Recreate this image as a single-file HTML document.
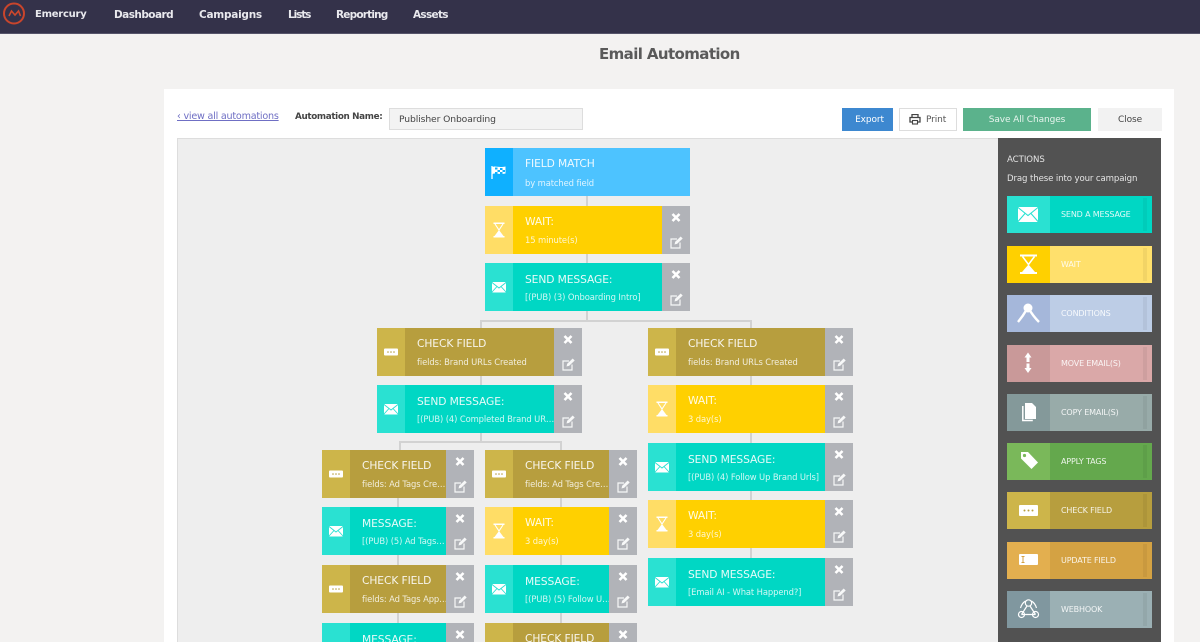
<!DOCTYPE html>
<html><head><meta charset="utf-8"><title>Email Automation</title>
<style>
*{box-sizing:border-box}
html,body{margin:0;padding:0;width:1200px;height:642px;overflow:hidden}
#r{position:absolute;left:0;top:0;width:1200px;height:642px;overflow:hidden;background:#f3f2f1;font-family:"DejaVu Sans","Liberation Sans",sans-serif;color:#fff}
.a{position:absolute;white-space:nowrap}
.nav{left:0;top:0;width:1200px;height:34px;background:#34324a;border-bottom:1px solid #55546a}
.m{top:8px;font-size:10.5px;line-height:14px;font-weight:bold;color:#e9e9ee;letter-spacing:-.35px}
.btn{top:108px;height:23px;line-height:24px;text-align:center;font-size:9px;letter-spacing:-.1px}
.n{position:absolute;height:48px;overflow:hidden}
.n>i{position:absolute;left:0;top:0;width:28px;height:48px}
.n>i svg{position:absolute;left:0;top:0;width:28px;height:48px}
.n>b{position:absolute;left:40px;top:9px;font-weight:normal;font-size:10.7px;line-height:14px;white-space:nowrap;letter-spacing:-.1px;color:rgba(255,255,255,.9)}
.n>em{position:absolute;left:40px;top:28px;font-style:normal;font-size:8.4px;line-height:12px;white-space:nowrap;letter-spacing:-.1px;color:rgba(255,255,255,.82)}
.n>u{position:absolute;right:0;top:0;width:28px;height:48px;background:#b1b3b8;text-decoration:none}
.n>u svg{position:absolute;left:0;top:0;width:28px;height:48px}
.s{background:#00d7c4}.s>i{background:#2ae1d2}.s>b{top:10px}
.w{background:#ffd000}.w>i{background:#ffdd66}
.c{background:#b79e3e}.c>i{background:#cdb54a}
.l{position:absolute;background:#d2d2d2}
.p{position:absolute;left:1007px;width:145px;height:37px}
.p>i{position:absolute;left:0;top:0;width:43px;height:37px}
.p>i svg{position:absolute;left:0;top:0;width:43px;height:37px}
.p>b{position:absolute;left:54px;top:13px;font-weight:normal;font-size:8px;line-height:12px;letter-spacing:-.15px;white-space:nowrap;color:rgba(255,255,255,.88)}
.p>s{position:absolute;left:136px;top:2px;width:4px;height:33px;background:rgba(0,0,0,.05)}
</style></head><body>
<div id="r">
<svg width="0" height="0" style="position:absolute">
<defs>
<symbol id="x" viewBox="0 0 28 48"><path d="M10.500 8l7 7M17.500 8l-7 7" stroke="#fff" stroke-width="2.600" fill="none"/><path d="M18 36.500v5.500H9v-9h6" stroke="#fff" stroke-width="1.200" fill="none" opacity=".9"/><path d="M12.500 38.500l.7-2.700 5.500-5.300 2 2-5.500 5.300z" fill="#fff" opacity=".9"/></symbol>
<symbol id="mail" viewBox="0 0 28 48"><rect x="7" y="19" width="14" height="10.500" rx="1" fill="#fff"/><path d="M7 19.500l7 5.500 7-5.500M7 29l5-5.500M21 29l-5-5.500" stroke="#2ae1d2" stroke-width=".9" fill="none"/></symbol>
<symbol id="glass" viewBox="0 0 28 48"><path d="M8.500 16.500h11V18h-11zM8.500 30h11v1.500h-11z" fill="#fff"/><path d="M10 18l4 6 4-6" fill="none" stroke="#fff" stroke-width="1.100"/><path d="M14 24l4.500 6h-9z" fill="#fff"/></symbol>
<symbol id="dots" viewBox="0 0 28 48"><rect x="7" y="20.500" width="14" height="7" rx="1" fill="#fff"/><circle cx="11" cy="24" r=".8" fill="#b79e3e"/><circle cx="14" cy="24" r=".8" fill="#b79e3e"/><circle cx="17" cy="24" r=".8" fill="#b79e3e"/></symbol>
<symbol id="bmail" viewBox="0 0 43 37"><rect x="11" y="11" width="20" height="15" rx="1" fill="#fff"/><path d="M11 11.500l10 8 10-8M11 25.500l7-8M31 25.500l-7-8" stroke="#2ae1d2" stroke-width="1.100" fill="none"/></symbol>
</defs></svg>

<div class="a nav"></div>
<svg class="a" style="left:3px;top:1px" width="24" height="26" viewBox="0 0 24 26"><circle cx="11" cy="12.500" r="10" fill="none" stroke="#c9452c" stroke-width="2"/><path d="M6 15l2.500-5 3.500 4 3.500-4 2 5" fill="none" stroke="#d0482c" stroke-width="1.600"/></svg>
<div class="a m" style="left:35px;top:8px;font-size:10px;letter-spacing:-.25px">Emercury</div>
<div class="a m" style="left:114px;letter-spacing:-.55px">Dashboard</div>
<div class="a m" style="left:199px;letter-spacing:-.25px">Campaigns</div>
<div class="a m" style="left:288px;letter-spacing:-1.100px">Lists</div>
<div class="a m" style="left:336px;letter-spacing:-.8px">Reporting</div>
<div class="a m" style="left:413px;letter-spacing:-.7px">Assets</div>

<div class="a" style="left:599px;top:45px;font-size:15px;line-height:19px;font-weight:bold;color:#5a5a5a;letter-spacing:-.6px">Email Automation</div>

<div class="a" style="left:164px;top:89px;width:1010px;height:553px;background:#fff"></div>
<div class="a" style="left:177px;top:110px;font-size:9.6px;line-height:13px;letter-spacing:-.22px;color:#6f6fc4;text-decoration:underline">‹ view all automations</div>
<div class="a" style="left:295px;top:111px;font-size:8.8px;line-height:13px;font-weight:bold;color:#444;letter-spacing:-.35px">Automation Name:</div>
<div class="a" style="left:389px;top:108px;width:194px;height:22px;line-height:21px;background:#f3f3f3;border:1px solid #ddd;padding-left:9px;font-size:9.2px;color:#444;letter-spacing:-.1px">Publisher Onboarding</div>

<div class="a btn" style="left:842px;width:51px;background:#3d88d0;padding-left:4px">Export</div>
<div class="a btn" style="left:899px;width:58px;background:#fff;border:1px solid #ddd;color:#555;line-height:22px;padding-left:26px;text-align:left">Print</div>
<svg class="a" style="left:909px;top:114px" width="12" height="11" viewBox="0 0 12 11"><path d="M3 3V.5h6V3M3 8H1V3.500h10V8H9" fill="none" stroke="#444" stroke-width="1.300"/><rect x="3.500" y="6.500" width="5" height="3.500" fill="none" stroke="#444" stroke-width="1.100"/></svg>
<div class="a btn" style="left:963px;width:128px;background:#5bb28c;color:#e6f4ed">Save All Changes</div>
<div class="a btn" style="left:1098px;width:64px;background:#f2f2f2;color:#444">Close</div>

<div class="a" style="left:177px;top:138px;width:821px;height:504px;background:#eeeeee;border-top:1px solid #ddd;border-left:1px solid #ddd"></div>

<!-- connectors -->
<div class="l" style="left:586px;top:196px;width:2px;height:10px"></div>
<div class="l" style="left:586px;top:254px;width:2px;height:9px"></div>
<div class="l" style="left:586px;top:311px;width:2px;height:10px"></div>
<div class="l" style="left:480px;top:320px;width:272px;height:2px"></div>
<div class="l" style="left:480px;top:320px;width:2px;height:8px"></div>
<div class="l" style="left:750px;top:320px;width:2px;height:8px"></div>
<div class="l" style="left:480px;top:376px;width:2px;height:9px"></div>
<div class="l" style="left:480px;top:433px;width:2px;height:9px"></div>
<div class="l" style="left:399px;top:441px;width:162px;height:2px"></div>
<div class="l" style="left:399px;top:441px;width:2px;height:9px"></div>
<div class="l" style="left:560px;top:441px;width:2px;height:9px"></div>
<div class="l" style="left:397px;top:498px;width:2px;height:9px"></div>
<div class="l" style="left:397px;top:555px;width:2px;height:10px"></div>
<div class="l" style="left:397px;top:613px;width:2px;height:10px"></div>
<div class="l" style="left:560px;top:498px;width:2px;height:9px"></div>
<div class="l" style="left:560px;top:555px;width:2px;height:10px"></div>
<div class="l" style="left:560px;top:613px;width:2px;height:10px"></div>
<div class="l" style="left:750px;top:376px;width:2px;height:9px"></div>
<div class="l" style="left:750px;top:433px;width:2px;height:10px"></div>
<div class="l" style="left:750px;top:491px;width:2px;height:9px"></div>
<div class="l" style="left:750px;top:548px;width:2px;height:10px"></div>

<!-- center -->
<div class="n" style="left:485px;top:148px;width:205px;background:#4dc3ff"><i style="background:#0fb0ff"><svg viewBox="0 0 28 48"><path d="M7 18v13" stroke="#fff" stroke-width="1.300"/><path d="M7.500 19c3-1.500 6 1 13-.5v7c-7 1.500-10-1-13 .5z" fill="#fff"/><path d="M10 19.500h2.500v2H10zM15 20h2.500v2H15zM12.500 22h2.500v2h-2.500zM17.500 22h2.500v2h-2.500zM10 24h2.500v2H10zM15 24h2.500v2H15z" fill="#0fb0ff"/></svg></i><b>FIELD MATCH</b><em style="top:29px">by matched field</em></div>
<div class="n w" style="left:485px;top:206px;width:205px"><i><svg><use href="#glass"/></svg></i><b>WAIT:</b><em>15 minute(s)</em><u><svg><use href="#x"/></svg></u></div>
<div class="n s" style="left:485px;top:263px;width:205px"><i><svg><use href="#mail"/></svg></i><b>SEND MESSAGE:</b><em>[(PUB) (3) Onboarding Intro]</em><u><svg><use href="#x"/></svg></u></div>

<!-- left col -->
<div class="n c" style="left:377px;top:328px;width:205px"><i><svg><use href="#dots"/></svg></i><b>CHECK FIELD</b><em>fields: Brand URLs Created</em><u><svg><use href="#x"/></svg></u></div>
<div class="n s" style="left:377px;top:385px;width:205px"><i><svg><use href="#mail"/></svg></i><b>SEND MESSAGE:</b><em>[(PUB) (4) Completed Brand UR…</em><u><svg><use href="#x"/></svg></u></div>

<!-- right col -->
<div class="n c" style="left:648px;top:328px;width:205px"><i><svg><use href="#dots"/></svg></i><b>CHECK FIELD</b><em>fields: Brand URLs Created</em><u><svg><use href="#x"/></svg></u></div>
<div class="n w" style="left:648px;top:385px;width:205px"><i><svg><use href="#glass"/></svg></i><b>WAIT:</b><em>3 day(s)</em><u><svg><use href="#x"/></svg></u></div>
<div class="n s" style="left:648px;top:443px;width:205px"><i><svg><use href="#mail"/></svg></i><b>SEND MESSAGE:</b><em>[(PUB) (4) Follow Up Brand Urls]</em><u><svg><use href="#x"/></svg></u></div>
<div class="n w" style="left:648px;top:500px;width:205px"><i><svg><use href="#glass"/></svg></i><b>WAIT:</b><em>3 day(s)</em><u><svg><use href="#x"/></svg></u></div>
<div class="n s" style="left:648px;top:558px;width:205px"><i><svg><use href="#mail"/></svg></i><b>SEND MESSAGE:</b><em>[Email AI - What Happend?]</em><u><svg><use href="#x"/></svg></u></div>

<!-- far left -->
<div class="n c" style="left:322px;top:450px;width:152px"><i><svg><use href="#dots"/></svg></i><b>CHECK FIELD</b><em>fields: Ad Tags Cre…</em><u><svg><use href="#x"/></svg></u></div>
<div class="n s" style="left:322px;top:507px;width:152px"><i><svg><use href="#mail"/></svg></i><b>MESSAGE:</b><em>[(PUB) (5) Ad Tags…</em><u><svg><use href="#x"/></svg></u></div>
<div class="n c" style="left:322px;top:565px;width:152px"><i><svg><use href="#dots"/></svg></i><b>CHECK FIELD</b><em>fields: Ad Tags App…</em><u><svg><use href="#x"/></svg></u></div>
<div class="n s" style="left:322px;top:623px;width:152px"><i><svg><use href="#mail"/></svg></i><b>MESSAGE:</b><em></em><u><svg><use href="#x"/></svg></u></div>

<!-- second -->
<div class="n c" style="left:485px;top:450px;width:152px"><i><svg><use href="#dots"/></svg></i><b>CHECK FIELD</b><em>fields: Ad Tags Cre…</em><u><svg><use href="#x"/></svg></u></div>
<div class="n w" style="left:485px;top:507px;width:152px"><i><svg><use href="#glass"/></svg></i><b>WAIT:</b><em>3 day(s)</em><u><svg><use href="#x"/></svg></u></div>
<div class="n s" style="left:485px;top:565px;width:152px"><i><svg><use href="#mail"/></svg></i><b>MESSAGE:</b><em>[(PUB) (5) Follow U…</em><u><svg><use href="#x"/></svg></u></div>
<div class="n c" style="left:485px;top:623px;width:152px"><i><svg><use href="#dots"/></svg></i><b>CHECK FIELD</b><em></em><u><svg><use href="#x"/></svg></u></div>

<!-- actions panel -->
<div class="a" style="left:998px;top:138px;width:163px;height:504px;background:#525252"></div>
<div class="a" style="left:1007px;top:154px;font-size:8.6px;line-height:12px;color:#e4e4e4;letter-spacing:-.05px">ACTIONS</div>
<div class="a" style="left:1007px;top:173px;font-size:8.6px;line-height:12px;color:#e4e4e4;letter-spacing:-.12px">Drag these into your campaign</div>

<div class="p" style="top:196px;background:#00d7c4"><i style="background:#2ae1d2"><svg><use href="#bmail"/></svg></i><b>SEND A MESSAGE</b><s></s></div>
<div class="p" style="top:246px;background:#ffe06c"><i style="background:#ffd000"><svg viewBox="0 0 43 37"><path d="M13 8.500h17v2H13zM13 26h17v2H13z" fill="#fff"/><path d="M15.500 10.500l6 8 6-8" fill="none" stroke="#fff" stroke-width="1.500"/><path d="M21.500 18.500l6.500 7.500H15z" fill="#fff"/></svg></i><b>WAIT</b><s></s></div>
<div class="p" style="top:295px;background:#bdcde6"><i style="background:#a5b7da"><svg viewBox="0 0 43 37"><circle cx="21" cy="13" r="4.500" fill="#fff"/><path d="M20 14Q16 21 11 27M22 14Q26 21 32 27" stroke="#fff" stroke-width="2.400" fill="none"/></svg></i><b>CONDITIONS</b><s></s></div>
<div class="p" style="top:345px;background:#daa8a8"><i style="background:#c99999"><svg viewBox="0 0 43 37"><path d="M21 7.500l3.500 5h-2v4.500h-3v-4.500h-2zM21 28l3.500-5h-2v-4.500h-3V23h-2z" fill="#fff"/></svg></i><b>MOVE EMAIL(S)</b><s></s></div>
<div class="p" style="top:394px;background:#98aba9"><i style="background:#84999a"><svg viewBox="0 0 43 37"><path d="M18 9h7l4 4v12H18z" fill="#fff"/><path d="M15.800 12v14.500h10" fill="none" stroke="#fff" stroke-width="1.500"/></svg></i><b>COPY EMAIL(S)</b><s></s></div>
<div class="p" style="top:443px;background:#64a84d"><i style="background:#7ab85a"><svg viewBox="0 0 43 37"><path d="M14 9h7l10 10.500-6.500 6.500L14 15.500z" fill="#fff"/><circle cx="17.500" cy="12.500" r="1.600" fill="#7ab85a"/></svg></i><b>APPLY TAGS</b><s></s></div>
<div class="p" style="top:492px;background:#b79e3e"><i style="background:#cdb54a"><svg viewBox="0 0 43 37"><rect x="12" y="13" width="19" height="11" rx="1" fill="#fff"/><circle cx="17.500" cy="18.500" r="1" fill="#b79e3e"/><circle cx="21.500" cy="18.500" r="1" fill="#b79e3e"/><circle cx="25.500" cy="18.500" r="1" fill="#b79e3e"/></svg></i><b>CHECK FIELD</b><s></s></div>
<div class="p" style="top:542px;background:#d4a243"><i style="background:#e3af4f"><svg viewBox="0 0 43 37"><rect x="12" y="12" width="19" height="11" rx="1" fill="#fff"/><path d="M14.500 14.500h3M14.500 20.500h3M16 14.500v6" stroke="#d4a243" stroke-width="1" fill="none"/></svg></i><b>UPDATE FIELD</b><s></s></div>
<div class="p" style="top:591px;background:#9bb0b4"><i style="background:#80979f"><svg viewBox="0 0 43 37"><g fill="none" stroke="#fff" stroke-width="1.200"><circle cx="21.500" cy="12" r="3.200"/><circle cx="14.500" cy="23.500" r="3"/><circle cx="28.500" cy="23.500" r="3"/><path d="M20 15l-5.500 8.500M23 15l5.500 8.500M14.500 23.500h14M18.500 10c-2.500 1.500-4 3.500-5 7M24.500 10c2.500 1.500 4 3.500 5 7"/></g></svg></i><b>WEBHOOK</b><s></s></div>
</div>
</body></html>
